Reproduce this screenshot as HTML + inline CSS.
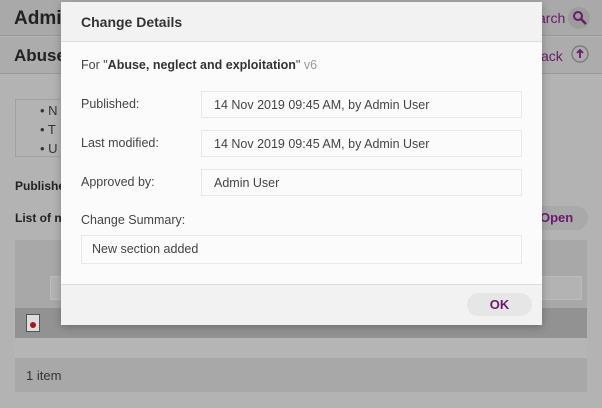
<!DOCTYPE html>
<html><head><style>
*{box-sizing:border-box;margin:0;padding:0}
body{width:602px;height:408px;overflow:hidden;background:#b3b3b3;font-family:"Liberation Sans",sans-serif;font-size:13px;color:#333;position:relative}
.a{position:absolute}
.lbl{position:absolute;left:20px;color:#444;font-size:12.5px}
.val{position:absolute;left:140px;width:321px;height:27px;border:1px solid #e8e8e8;background:#fbfbfb;padding:6px 12px;color:#444;font-size:12.5px}
</style></head><body>
<div class="a" style="left:0;top:0;width:602px;height:36px;background:#a9a9a9;border-bottom:1px solid #9a9a9a"></div>
<div class="a" style="left:14px;top:8px;font-size:19px;font-weight:bold;color:#222">Admin</div>
<div class="a" style="left:538px;top:10px;color:#6b1a6b;font-size:14px">arch</div>
<div class="a" style="left:568px;top:7px;width:22px;height:22px;border-radius:50%;background:#9c9c9c"></div>
<svg class="a" style="left:572px;top:10px" width="16" height="16"><circle cx="6" cy="6" r="4" fill="none" stroke="#6b1a6b" stroke-width="2"/><path d="M9 9l5 5" stroke="#6b1a6b" stroke-width="2.5"/></svg>
<div class="a" style="left:0;top:37px;width:602px;height:37px;background:#acacac;border-bottom:1px solid #9a9a9a"></div>
<div class="a" style="left:14px;top:46px;font-size:17px;font-weight:bold;color:#222">Abuse</div>
<div class="a" style="left:541px;top:48px;color:#6b1a6b;font-size:14px">ack</div>
<svg class="a" style="left:570px;top:45px" width="20" height="20"><circle cx="10" cy="9" r="8" fill="none" stroke="#777" stroke-width="1.3"/><path d="M10 13V5M7 8l3-3 3 3" stroke="#6b1a6b" stroke-width="1.8" fill="none"/></svg>
<div class="a" style="left:15px;top:99px;width:273px;height:58px;border:1px solid #a0a0a0"></div>
<div class="a" style="left:40px;top:101px;line-height:19px;color:#333">• N<br>• T<br>• U</div>
<div class="a" style="left:15px;top:179px;font-weight:bold;font-size:12px;color:#222">Publishe</div>
<div class="a" style="left:15px;top:211px;font-weight:bold;font-size:12px;color:#222">List of n</div>
<div class="a" style="left:520px;top:206px;width:68px;height:24px;border-radius:12px;background:#a9a9a9"></div>
<div class="a" style="left:540px;top:210px;font-weight:bold;color:#6b1a6b;font-size:13px">Open</div>
<div class="a" style="left:15px;top:240px;width:572px;height:152px;background:#a8a8a8"></div>
<div class="a" style="left:50px;top:276px;width:532px;height:24px;background:#b3b3b3;border:1px solid #bbb"></div>
<div class="a" style="left:15px;top:308px;width:572px;height:30px;background:#929292"></div>
<div class="a" style="left:26px;top:314px;width:14px;height:18px;background:#ddd;border:1px solid #555"></div>
<div class="a" style="left:30px;top:322px;width:6px;height:6px;border-radius:50%;background:#a01818"></div>
<div class="a" style="left:15px;top:338px;width:572px;height:20px;background:#b5b5b5"></div>
<div class="a" style="left:26px;top:368px;color:#333">1 item</div>

<div class="a" style="left:61px;top:2px;width:481px;height:323px;background:#fbfbfb;box-shadow:0 2px 8px rgba(0,0,0,.25)">
 <div class="a" style="left:0;top:0;width:481px;height:40px;background:#f2f2f2;border-bottom:1px solid #ddd"></div>
 <div class="a" style="left:20px;top:12px;font-weight:bold;font-size:14px;color:#333">Change Details</div>
 <div class="lbl" style="top:56px">For "<b style="color:#333">Abuse, neglect and exploitation</b>" <span style="color:#999">v6</span></div>
 <div class="lbl" style="top:95px">Published:</div>
 <div class="val" style="top:89px">14 Nov 2019 09:45 AM, by Admin User</div>
 <div class="lbl" style="top:134px">Last modified:</div>
 <div class="val" style="top:128px">14 Nov 2019 09:45 AM, by Admin User</div>
 <div class="lbl" style="top:173px">Approved by:</div>
 <div class="val" style="top:167px">Admin User</div>
 <div class="lbl" style="top:211px">Change Summary:</div>
 <div class="val" style="left:20px;width:441px;top:233px;height:29px;padding:6px 10px">New section added</div>
 <div class="a" style="left:0;top:282px;width:481px;height:41px;background:#f2f2f2;border-top:1px solid #ddd"></div>
 <div class="a" style="left:406px;top:291px;width:65px;height:23px;border-radius:12px;background:#e6e6e6;text-align:center;line-height:23px;font-weight:bold;color:#6b1a6b">OK</div>
</div>
</body></html>
